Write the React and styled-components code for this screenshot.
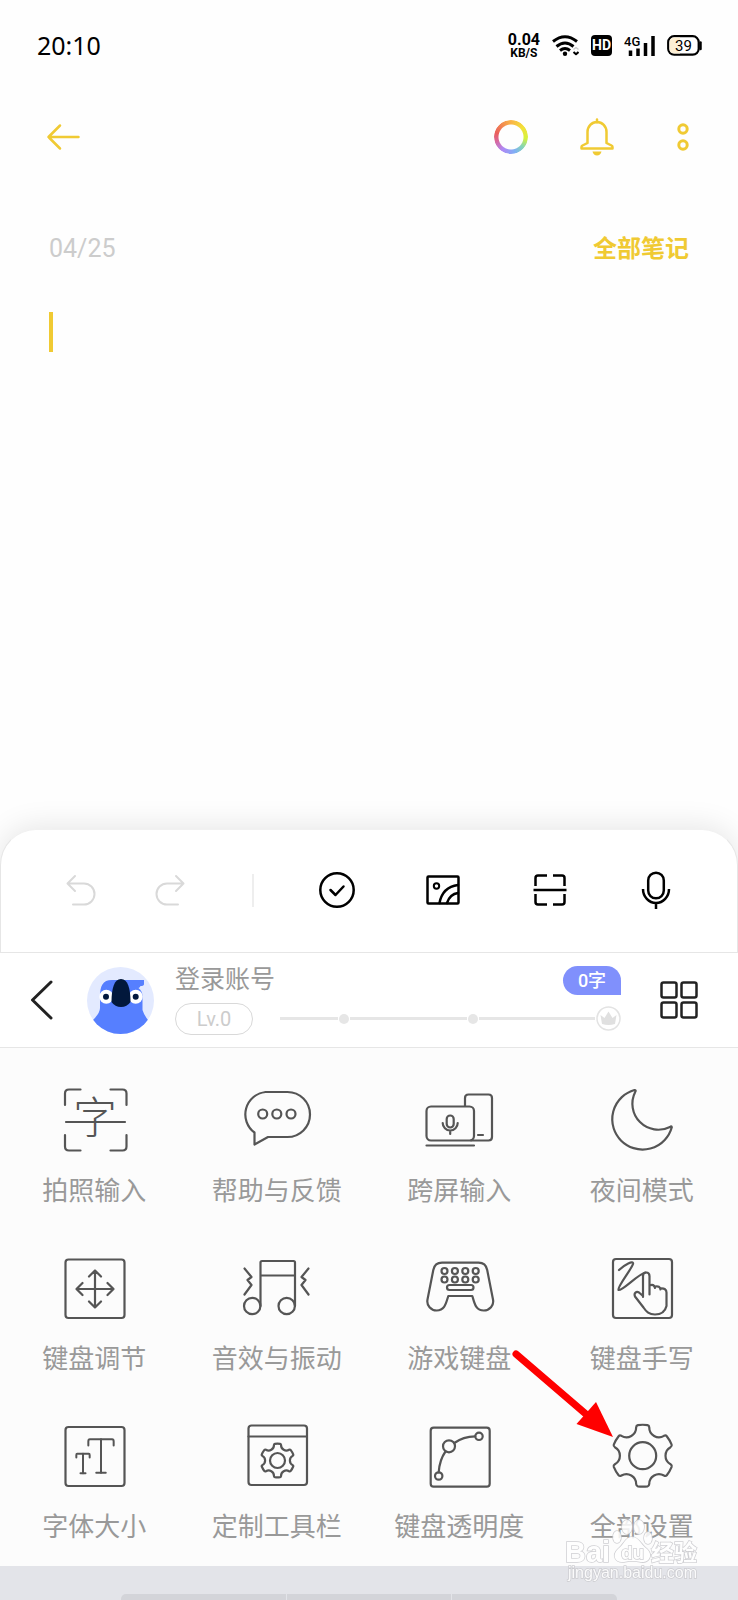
import React, { useState } from "react";
import styled, { createGlobalStyle, ThemeProvider } from "styled-components";
import { Type } from "lucide-react";

const theme = {
  yellow: "#f0ca33",
  black: "#000",
  ink: "#555",
  label: "#999",
  faint: "#d9d9d9",
  line: "#e6e6e6",
  violet: "#8090fc",
};

const GlobalStyle = createGlobalStyle`
  * {
    box-sizing: border-box;
  }

  body {
    margin: 0;
    background: #fefefe;
    font-family: Roboto, "Noto Sans CJK SC", sans-serif;
  }

  button {
    padding: 0;
    border: 0;
    background: none;
    color: inherit;
    font: inherit;
    cursor: pointer;
  }

  svg {
    display: block;
  }
`;

const Page = styled.div`
  position: relative;
  display: flex;
  flex-direction: column;
  min-height: 100vh;
  overflow: hidden;
`;

const StatusBar = styled.header`
  display: flex;
  align-items: center;
  justify-content: space-between;
  height: 90px;
  padding: 0 36px 0 37px;
`;

const Clock = styled.time`
  font-family: "Noto Sans", sans-serif;
  font-size: 25px;
  color: ${props => props.theme.black};
`;

const StatusIcons = styled.div`
  display: flex;
  align-items: center;
  gap: 12px;
`;

const Speed = styled.div`
  display: flex;
  flex-direction: column;
  align-items: center;
  padding-top: 2px;
  font-weight: 700;
  font-size: 16px;
  line-height: 14px;

  small {
    font-size: 12px;
    line-height: 12px;
  }
`;

const HdBadge = styled.span`
  width: 21px;
  border-radius: 4px;
  background: ${props => props.theme.black};
  color: #fff;
  font-weight: 700;
  font-size: 14px;
  line-height: 21px;
  text-align: center;
`;

const NavBar = styled.nav`
  display: flex;
  align-items: center;
  justify-content: space-between;
  height: 94px;
  padding: 0 35px 0 44px;
  color: ${props => props.theme.yellow};
`;

const NavActions = styled.div`
  display: flex;
  gap: 46px;
`;

const ColorRing = styled.span`
  display: block;
  width: 34px;
  height: 34px;
  border-radius: 50%;
  background: conic-gradient(
    #f9b347,
    #f3e03a 50deg,
    #d6f23c 95deg,
    #86d5b5 130deg,
    #7fb0f5 165deg,
    #b088f5 215deg,
    #d9679a 255deg,
    #ea5f5c 285deg,
    #f9b347
  );
  mask: radial-gradient(circle, transparent 12px, #000 13px);
`;

const Note = styled.main`
  display: flex;
  flex: 1;
  flex-direction: column;
  padding: 34px 49px 0;
`;

const NoteHead = styled.div`
  display: flex;
  align-items: center;
  justify-content: space-between;
  height: 60px;
`;

const NoteDate = styled.time`
  font-size: 25px;
  color: #ccc;
`;

const NoteLink = styled.a`
  padding-bottom: 4px;
  font-weight: 700;
  font-size: 24px;
  color: ${props => props.theme.yellow};
  text-decoration: none;
`;

const Editor = styled.div`
  display: flex;
  flex: 1;
  margin-top: 34px;
`;

const Caret = styled.span`
  width: 4px;
  height: 40px;
  background: ${props => props.theme.yellow};
`;

const NoteText = styled.textarea`
  flex: 1;
  padding: 0;
  border: 0;
  outline: 0;
  background: transparent;
  font: inherit;
  font-size: 28px;
  line-height: 40px;
  resize: none;
`;

const Sheet = styled.section`
  display: flex;
  align-items: center;
  height: 124px;
  padding: 0 62px 2px;
  border: 1px solid ${props => props.theme.line};
  border-top-color: #f1f1f1;
  border-radius: 36px 36px 0 0;
  background: #fff;
  box-shadow: 0 -2px 30px rgba(0, 0, 0, 0.1);
`;

const History = styled.div`
  display: flex;
  gap: 53px;
  color: ${props => props.theme.faint};
`;

const Divider = styled.span`
  width: 2px;
  height: 33px;
  margin: 0 64px;
  background: #eee;
`;

const Tools = styled.div`
  display: flex;
  flex: 1;
  justify-content: space-between;
`;

const IconButton = styled.button`
  display: grid;
  place-items: center;
  width: ${props => props.$size || 38}px;
  height: ${props => props.$size || 38}px;
`;

const Account = styled.section`
  display: flex;
  align-items: center;
  height: 95px;
  padding: 0 40px 0 22px;
  border-bottom: 1px solid ${props => props.theme.line};
  background: #fff;
`;

const AvatarLink = styled.a`
  margin: 0 21px 0 25px;
`;

const Profile = styled.div`
  flex: 1;
  margin-right: 39px;
`;

const ProfileRow = styled.div`
  display: flex;
  align-items: center;
  justify-content: space-between;
`;

const Login = styled.a`
  font-size: 25px;
  line-height: 28px;
  color: ${props => props.theme.label};
  text-decoration: none;
`;

const Count = styled.span`
  width: 58px;
  border-radius: 15px 15px 0 15px;
  background: ${props => props.theme.violet};
  color: #fff;
  font-weight: 500;
  font-size: 18px;
  line-height: 29px;
  text-align: center;
`;

const Level = styled.span`
  width: 78px;
  margin: 8px 27px 0 0;
  border: 1px solid ${props => props.theme.faint};
  border-radius: 16px;
  font-size: 20px;
  line-height: 30px;
  color: #ccc;
  text-align: center;
`;

const Progress = styled.div`
  display: flex;
  flex: 1;
  align-items: center;
  gap: 1px;
  margin-top: 8px;
`;

const Segment = styled.span`
  flex: ${props => props.$grow};
  height: 3px;
  background: ${props => props.theme.line};
`;

const Dot = styled.span`
  width: 10px;
  height: 10px;
  border-radius: 50%;
  background: ${props => props.theme.line};
`;

const Grid = styled.section`
  display: grid;
  grid-template-columns: repeat(4, 1fr);
  row-gap: 46px;
  padding: 38px 5px 22px 3px;
  background: #fcfcfc;
`;

const Tile = styled.button`
  position: relative;
  display: flex;
  flex-direction: column;
  align-items: center;
  gap: 20px;
  font-size: 26px;
  line-height: 34px;
  color: ${props => props.theme.label};
`;

const Glyph = styled.svg`
  width: 68px;
  height: 68px;
  overflow: visible;
  fill: none;
  stroke: ${props => props.theme.ink};
  stroke-width: 2.2;
  stroke-linecap: round;
  stroke-linejoin: round;

  svg {
    stroke: inherit;
  }

  svg * {
    vector-effect: non-scaling-stroke;
  }

  text {
    fill: ${props => props.theme.ink};
    stroke: none;
    font-family: "Noto Sans CJK SC", sans-serif;
    font-weight: 300;
  }
`;

const Pointer = styled.svg`
  position: absolute;
  top: -76px;
  left: -44px;
  z-index: 1;
  pointer-events: none;
`;

const Keyboard = styled.footer`
  height: 34px;
  padding: 28px 121px 0;
  background: #e3e4e9;
`;

const Keys = styled.div`
  display: grid;
  grid-template-columns: repeat(3, 1fr);
  gap: 1px;
  height: 6px;
  border-radius: 5px 5px 0 0;
  overflow: hidden;

  span {
    background: #d3d4d9;
  }
`;

const Watermark = styled.svg`
  position: absolute;
  right: 38px;
  bottom: 12px;
  fill: #fff;
  stroke: #c8c8cc;
  stroke-width: 1.5;
  paint-order: stroke;
  opacity: 0.85;
  font-family: "Liberation Sans", "Noto Sans CJK SC", sans-serif;
  font-weight: 700;
  pointer-events: none;
`;

const point = (cx, cy, r, deg) => {
  const a = (deg * Math.PI) / 180;
  return `${(cx + r * Math.cos(a)).toFixed(2)} ${(cy + r * Math.sin(a)).toFixed(2)}`;
};

// six-tooth cog, first tooth pointing up
function gearPath(cx, cy, r) {
  const p = (scale, deg) => point(cx, cy, r * scale, deg);
  let d = "";
  for (let i = 0; i < 6; i++) {
    const t = -90 + i * 60;
    d += `${i ? "L" : "M"}${p(0.99, t - 9)}Q${p(1, t)} ${p(0.99, t + 9)}`;
    d += `Q${p(0.99, t + 12)} ${p(0.93, t + 13)}`;
    d += `A${r * 0.31} ${r * 0.31} 0 0 0 ${p(0.93, t + 47)}`;
    d += `Q${p(0.99, t + 48)} ${p(0.99, t + 51)}`;
  }
  return `${d}Z`;
}

const tiles = [
  {
    label: "拍照输入",
    icon: (
      <>
        <path d="M5 19V7.500q0-4 4-4H20.500M50.500 3.500h12q4 0 4 4V19M66.500 49v11.500q0 4-4 4H50.500M20.500 64.500H9q-4 0-4-4V49M6 36h59" />
        <text x="13" y="48" fontSize="44">
          字
        </text>
      </>
    ),
  },
  {
    label: "帮助与反馈",
    icon: (
      <>
        <path d="M22.500 6h22a22.500 22.500 0 0 1 0 45H25L11.500 58.500V46.500A22.500 22.500 0 0 1 22.500 6Z" />
        <circle cx="19.700" cy="28" r="4.500" />
        <circle cx="33.800" cy="28" r="4.500" />
        <circle cx="48" cy="28" r="4.500" />
      </>
    ),
  },
  {
    label: "跨屏输入",
    icon: (
      <>
        <rect x="1.500" y="20.500" width="47.500" height="34" rx="4.500" />
        <path d="M1.500 59.500H49M40 20V12q0-3.500 3.500-3.500H63.500q3.500 0 3.500 3.500V51q0 3.500-3.500 3.500H46M53 49h5" />
        <rect x="21.700" y="29.500" width="7" height="12" rx="3.500" />
        <path d="M17.700 37a7.500 7.500 0 0 0 15 0M25.200 44.500V48" />
      </>
    ),
  },
  {
    label: "夜间模式",
    icon: (
      <path d="M26.500 4A30.300 30.300 0 1 0 63.800 41.200Q63.500 39.500 62 41A26 26 0 0 1 27.200 6Q28.500 4 26.500 4Z" />
    ),
  },
  {
    label: "键盘调节",
    icon: (
      <>
        <rect x="5.500" y="5.500" width="59" height="58.500" rx="3" />
        <path d="M35 16.500v37M29 22.500l6-6 6 6M29 47.500l6 6 6-6M16.500 35h37M22.500 29l-6 6 6 6M47.500 29l6 6-6 6" />
      </>
    ),
  },
  {
    label: "音效与振动",
    icon: (
      <>
        <path d="M17.500 52V8.500q0-1.500 1.500-1.500H50.500q1.500 0 1.500 1.500V52M17.500 21.500H52M1.500 14.500l7 8.500-4 3 4 5-7 9.500M65.500 14.500l-7 8.500 4 3-4 5 7 9.500" />
        <circle cx="9.200" cy="52" r="8.200" />
        <circle cx="43.700" cy="52" r="8.200" />
      </>
    ),
  },
  {
    label: "游戏键盘",
    icon: (
      <>
        <path d="M17 8.700H53.500C58 8.700 61.300 11.500 62.200 16L68 45.500C69.200 51.500 64.500 56.500 58.800 56.500C50.500 56.500 49.500 49 47.300 42H23.300C21 49 20 56.500 11.700 56.500C6 56.500 1.300 51.500 2.500 45.500L8.300 16C9.200 11.500 12.500 8.700 17 8.700Z" />
        {[17, 25.5].map(y =>
          [19.5, 29.9, 40.3, 50.7].map(x => (
            <circle key={`${x}-${y}`} cx={x} cy={y} r="3" />
          ))
        )}
        <rect x="22" y="31" width="26.500" height="5" rx="2.500" />
      </>
    ),
  },
  {
    label: "键盘手写",
    icon: (
      <>
        <rect x="5" y="5" width="59" height="59" rx="3" />
        <path d="M11 16C16 11 26 5.500 25 10C23 16 9 33 10.500 36C14 37.500 30 20 37.500 18.500" />
        <path d="M35 43V22q0-3.500 3.200-3.500T41.500 22V40.500M41.500 31.500q4.500-2 5.500 2.500M47 32.500q5-1 5.500 3M52.500 34.500q6-.5 6 4V52C57 58 52.500 60.500 47 60.500C41 60.500 38.500 58 35.500 53.500L27 42.500C25.500 39 28.500 37 31 38.500L35 42" />
      </>
    ),
  },
  {
    label: "字体大小",
    icon: (
      <>
        <rect x="5.500" y="5" width="59" height="59" rx="3" />
        <Type x="22" y="9" width="38" height="50" preserveAspectRatio="none" />
        <Type x="13" y="27" width="20" height="29" preserveAspectRatio="none" />
      </>
    ),
  },
  {
    label: "定制工具栏",
    icon: (
      <>
        <rect x="5.500" y="3.500" width="58.500" height="59.500" rx="3" />
        <path d={`M5.500 14.500H64${gearPath(34.5, 38.5, 17)}`} />
        <circle cx="34.500" cy="38.500" r="7.500" />
      </>
    ),
  },
  {
    label: "键盘透明度",
    icon: (
      <>
        <rect x="5.700" y="5.700" width="59" height="59" rx="3" />
        <circle cx="13.700" cy="54" r="3.700" />
        <circle cx="24" cy="24.300" r="6" />
        <circle cx="54" cy="14.300" r="3.700" />
        <path d="M13.700 50.300Q14.500 38 20.500 29.500M29.300 21Q38 14.500 50.300 14.300" />
      </>
    ),
  },
  {
    label: "全部设置",
    pointer: true,
    icon: (
      <>
        <path d={gearPath(34.7, 33.7, 31.3)} />
        <circle cx="34.700" cy="33.700" r="13.500" />
      </>
    ),
  },
];

const stroke = {
  fill: "none",
  stroke: "currentColor",
  strokeWidth: 2.5,
  strokeLinecap: "round",
  strokeLinejoin: "round",
};

const Wifi = () => (
  <svg width="27" height="21" viewBox="0 0 27 21" {...stroke} strokeLinecap="butt">
    <path d="M1 6.500Q13 -3 25 6.500M4.500 11.500Q13 4.500 21.500 11.500M8 15.500Q13 11.500 18 15.500" strokeWidth="3" />
    <circle cx="13" cy="18.700" r="2.200" fill="#000" stroke="none" />
    <path d="M21.500 14.500l2.500-2 2.500 2" stroke="#ccc" strokeWidth="1.500" />
    <path d="M21.500 17l2.500 2.300 2.500-2.300" strokeWidth="2" />
  </svg>
);

const Signal = () => (
  <svg width="31" height="21" viewBox="0 0 31 21">
    <text x="0" y="11" fontSize="13" fontWeight="500">
      4G
    </text>
    <path d="M6.500 15.500v5.500M14 13.500v7.500M21.500 8v13M29 1v20" stroke="#000" strokeWidth="3.500" />
  </svg>
);

const Battery = () => (
  <svg width="35" height="21" viewBox="0 0 35 21">
    <rect x="1.200" y="1.200" width="30.500" height="18.500" rx="6" fill="#fff" stroke="#000" strokeWidth="2.200" />
    <path d="M13 2.500H7Q2.500 3 2.500 7v7q0 4 4.500 4.500h6Z" fill="#fdf0d5" />
    <path d="M33.500 7.500v6.500" stroke="#000" strokeWidth="2.500" strokeLinecap="round" />
    <text x="16.500" y="16" fontSize="15" textAnchor="middle">
      39
    </text>
  </svg>
);

const Avatar = () => (
  <svg width="67" height="67" viewBox="0 0 67 67">
    <clipPath id="avatar">
      <circle cx="33.500" cy="33.500" r="33.500" />
    </clipPath>
    <g clipPath="url(#avatar)">
      <rect width="67" height="67" fill="#e3eaff" />
      <path
        d="M13 30C13 19 15.500 13 25 13H57V17Q57 19 53.500 19Q53 20.500 51.500 21Q56 25 55.500 30V43Q57 48 61 53V67H6V53Q13 46 13 41Z"
        fill="#567fff"
      />
      <circle cx="19.300" cy="29.700" r="7" fill="#fff" />
      <circle cx="48.700" cy="29.700" r="7" fill="#fff" />
      <circle cx="19" cy="29.700" r="3" fill="#02183c" />
      <circle cx="48.700" cy="29.700" r="3" fill="#02183c" />
      <path d="M34 12C41 12 43.500 22 43.500 35Q40 40 34 40T24.500 35C24.500 22 27 12 34 12Z" fill="#02183c" />
    </g>
  </svg>
);

const Crown = () => (
  <svg width="25" height="25" viewBox="0 0 25 25">
    <circle cx="12.500" cy="12.500" r="11.500" fill="#fff" stroke="#e3e3e3" strokeWidth="1.500" />
    <path d="M4.500 9l4 3 4-6.500 4 6.500 4-3-1.500 9q-6.500 2-13 0Z" fill="#e0e0e0" />
  </svg>
);

function App() {
  const [note, setNote] = useState("");

  return (
    <ThemeProvider theme={theme}>
      <GlobalStyle />
      <Page>
        <StatusBar>
          <Clock>20:10</Clock>
          <StatusIcons>
            <Speed>
              0.04<small>KB/S</small>
            </Speed>
            <Wifi />
            <HdBadge>HD</HdBadge>
            <Signal />
            <Battery />
          </StatusIcons>
        </StatusBar>

        <NavBar>
          <IconButton aria-label="返回">
            <svg width="38" height="28" viewBox="0 0 38 28" {...stroke}>
              <path d="M34.500 14H4.500M16 2.500L4.500 14L16 25.500" />
            </svg>
          </IconButton>
          <NavActions>
            <IconButton $size={40} aria-label="颜色">
              <ColorRing />
            </IconButton>
            <IconButton $size={40} aria-label="提醒">
              <svg width="34" height="40" viewBox="0 0 34 40" {...stroke}>
                <path d="M17 2.500v3M7.500 26V15a9.500 10 0 0 1 19 0V26L31.500 28.500q1 .5 1 1.500v1.500H1.500V30q0-1 1-1.500Z" />
                <path d="M12.500 34.500h9q-1 4-4.500 4t-4.500-4Z" fill="currentColor" stroke="none" />
              </svg>
            </IconButton>
            <IconButton $size={40} aria-label="更多">
              <svg width="14" height="30" viewBox="0 0 14 30" {...stroke} strokeWidth="3">
                <circle cx="7" cy="7" r="4.200" />
                <circle cx="7" cy="23" r="4.200" />
              </svg>
            </IconButton>
          </NavActions>
        </NavBar>

        <Note>
          <NoteHead>
            <NoteDate>04/25</NoteDate>
            <NoteLink href="#notes">全部笔记</NoteLink>
          </NoteHead>
          <Editor>
            <Caret />
            <NoteText
              aria-label="笔记"
              value={note}
              onChange={e => setNote(e.target.value)}
            />
          </Editor>
        </Note>

        <Sheet>
          <History>
            <IconButton $size={36} aria-label="撤销">
              <svg width="36" height="36" viewBox="0 0 36 36" {...stroke} strokeWidth="2">
                <path d="M12 4L4.500 11.500L12 19M4.500 11.500H21a10.500 10.500 0 0 1 0 21H10" />
              </svg>
            </IconButton>
            <IconButton $size={36} aria-label="重做">
              <svg width="36" height="36" viewBox="0 0 36 36" {...stroke} strokeWidth="2">
                <path d="M24 4L31.500 11.500L24 19M31.500 11.500H15a10.500 10.500 0 0 0 0 21H26" />
              </svg>
            </IconButton>
          </History>
          <Divider />
          <Tools>
            <IconButton aria-label="待办">
              <svg width="38" height="38" viewBox="0 0 38 38" {...stroke}>
                <circle cx="19" cy="19" r="16.700" />
                <path d="M12.500 19l5 5 8-8.500" />
              </svg>
            </IconButton>
            <IconButton aria-label="图片">
              <svg width="38" height="38" viewBox="0 0 38 38" {...stroke}>
                <rect x="3.500" y="5.500" width="31" height="27" rx="1" />
                <circle cx="12.500" cy="15" r="2.700" strokeWidth="2" />
                <path d="M15.500 32Q18.500 16 34 14M23 32Q26 23 34 22" />
              </svg>
            </IconButton>
            <IconButton aria-label="扫描">
              <svg width="38" height="38" viewBox="0 0 38 38" {...stroke} strokeLinecap="butt">
                <path d="M4.500 15V7q0-2.500 2.500-2.500h9M22 4.500h9q2.500 0 2.500 2.500v8M33.500 23v8q0 2.500-2.500 2.500h-9M16 33.500H7q-2.500 0-2.500-2.500v-8M2.500 19h33" />
              </svg>
            </IconButton>
            <IconButton aria-label="录音">
              <svg width="38" height="38" viewBox="0 0 38 38" {...stroke} strokeLinecap="butt">
                <rect x="11.200" y="1.700" width="15.600" height="25.600" rx="7.800" />
                <path d="M6 18a13 14 0 0 0 26 0M19 32v6" />
              </svg>
            </IconButton>
          </Tools>
        </Sheet>

        <Account>
          <IconButton $size={40} aria-label="收起">
            <svg width="24" height="40" viewBox="0 0 24 40" {...stroke} stroke="#222" strokeWidth="3">
              <path d="M21 2L2.500 20L21 38" />
            </svg>
          </IconButton>
          <AvatarLink href="#profile" aria-label="头像">
            <Avatar />
          </AvatarLink>
          <Profile>
            <ProfileRow>
              <Login href="#login">登录账号</Login>
              <Count>0字</Count>
            </ProfileRow>
            <ProfileRow>
              <Level>Lv.0</Level>
              <Progress role="progressbar" aria-valuenow={0} aria-label="等级">
                <Segment $grow={1} />
                <Dot />
                <Segment $grow={2} />
                <Dot />
                <Segment $grow={2} />
                <Crown />
              </Progress>
            </ProfileRow>
          </Profile>
          <IconButton aria-label="全部功能">
            <svg width="38" height="38" viewBox="0 0 38 38" {...stroke} stroke="#222">
              <rect x="1.500" y="1.500" width="15" height="15" rx="2" />
              <rect x="21.500" y="1.500" width="15" height="15" rx="2" />
              <rect x="1.500" y="21.500" width="15" height="15" rx="2" />
              <rect x="21.500" y="21.500" width="15" height="15" rx="2" />
            </svg>
          </IconButton>
        </Account>

        <Grid>
          {tiles.map(tile => (
            <Tile key={tile.label}>
              <Glyph viewBox="0 0 68 68">{tile.icon}</Glyph>
              {tile.label}
              {tile.pointer && (
                <Pointer width="112" height="96" viewBox="0 0 112 96" fill="#f00">
                  <path d="M9 8L80 69" stroke="#f00" strokeWidth="7" strokeLinecap="round" />
                  <path d="M106 91L89 56L69.500 78Z" />
                </Pointer>
              )}
            </Tile>
          ))}
        </Grid>

        <Keyboard>
          <Keys>
            <span />
            <span />
            <span />
          </Keys>
        </Keyboard>

        <Watermark width="136" height="70" viewBox="0 0 136 70" aria-hidden="true">
          <text x="1" y="44" fontSize="29">
            Bai
          </text>
          <ellipse cx="53" cy="19" rx="4" ry="6" />
          <ellipse cx="63" cy="9" rx="5" ry="7" />
          <ellipse cx="75" cy="9" rx="5" ry="7" />
          <ellipse cx="84" cy="20" rx="4" ry="6" />
          <path d="M68 19C75 19 77 27 83 31C90 38 84 45 77 44Q68 42 60 44C52 45 47 38 54 31C60 27 61 19 68 19Z" />
          <text x="57" y="41" fontSize="19">
            du
          </text>
          <text x="87" y="43" fontSize="23">
            经验
          </text>
          <text x="4" y="60" fontSize="16" fontWeight="400">
            jingyan.baidu.com
          </text>
        </Watermark>
      </Page>
    </ThemeProvider>
  );
}

export default App;
